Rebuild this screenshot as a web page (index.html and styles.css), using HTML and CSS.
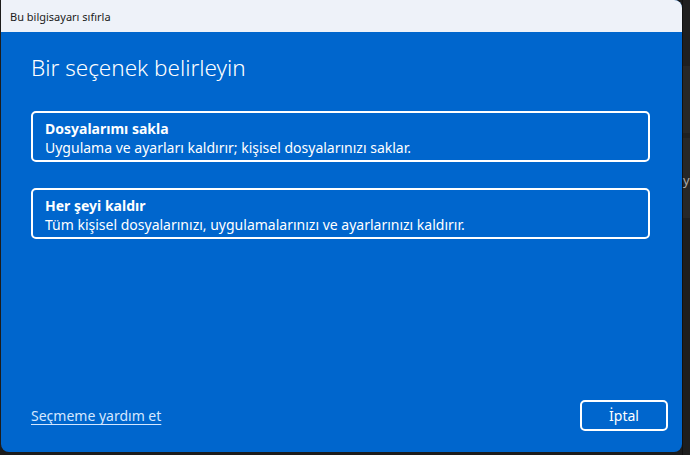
FILE: index.html
```html
<!DOCTYPE html>
<html lang="tr">
<head>
    <meta charset="UTF-8">
    <meta name="viewport" content="width=device-width, initial-scale=1.0">
    <title>Bu bilgisayarı sıfırla</title>
    <link rel="stylesheet" href="styles.css">
</head>
<body>
    <div class="window">
        <div class="titlebar">Bu bilgisayarı sıfırla</div>

        <div class="content">
            <h1>Bir seçenek belirleyin</h1>

            <div class="options">
                <button class="option">
                    <span class="option-title">Dosyalarımı sakla</span>
                    <span class="option-desc">Uygulama ve ayarları kaldırır; kişisel dosyalarınızı saklar.</span>
                </button>
                <button class="option">
                    <span class="option-title">Her şeyi kaldır</span>
                    <span class="option-desc">Tüm kişisel dosyalarınızı, uygulamalarınızı ve ayarlarınızı kaldırır.</span>
                </button>
            </div>

            <div class="footer">
                <a href="#" class="help-link">Seçmeme yardım et</a>
                <button class="cancel">İptal</button>
            </div>
        </div>
    </div>

    <!-- settings window peeking out behind the dialog -->
    <div class="behind">
        <div class="band band-top"></div>
        <div class="band band-light"></div>
        <div class="band band-sep"></div>
        <div class="band band-light band-text">y</div>
        <div class="band band-bottom"></div>
    </div>
</body>
</html>
```

FILE: styles.css
```css
body {
    margin: 0;
    height: 455px;
    display: flex;
    background-color: #1c1c1c;
    font-family: 'Noto Sans', 'Open Sans', sans-serif;
    overflow: hidden;
}

.window {
    width: 681px;
    height: 452px;
    margin-left: 1px;
    display: flex;
    flex-direction: column;
    border-radius: 0 8px 8px 8px;
    overflow: hidden;
    background-color: #0066cd;
}

.titlebar {
    height: 32px;
    flex-shrink: 0;
    display: flex;
    align-items: center;
    padding-left: 9px;
    background-color: #eef2f9;
    color: #1a1a1a;
    font-size: 11px;
}

.content {
    flex: 1;
    display: flex;
    flex-direction: column;
    padding: 0 14px 21px 30px;
    color: white;
}

h1 {
    margin: 20px 0 0 0;
    font-size: 22.5px;
    font-weight: 300;
    line-height: 32px;
}

.options {
    display: flex;
    flex-direction: column;
    gap: 26px;
    margin-top: 27px;
    margin-right: 18px;
}

.option {
    display: flex;
    flex-direction: column;
    align-items: flex-start;
    height: 51px;
    padding: 6px 12px 0 12px;
    background: none;
    border: 2px solid white;
    border-radius: 5px;
    color: white;
    font-family: inherit;
    text-align: left;
    cursor: pointer;
}

.option-title {
    font-size: 14px;
    font-weight: bold;
    line-height: 19px;
}

.option-desc {
    font-size: 14px;
    line-height: 19px;
}

.footer {
    margin-top: auto;
    display: flex;
    justify-content: space-between;
    align-items: center;
}

.help-link {
    color: #d4e7ff;
    font-size: 14px;
    text-decoration: underline;
    text-underline-offset: 3px;
}

.cancel {
    width: 88px;
    height: 31px;
    background: none;
    border: 2px solid white;
    border-radius: 5px;
    color: white;
    font-family: inherit;
    font-size: 14px;
    cursor: pointer;
}

.behind {
    flex: 1;
    display: flex;
    flex-direction: column;
    border-left: 1px solid #111;
}

.band {
    flex-shrink: 0;
}

.band-top {
    height: 66px;
    background-color: #1f1f1f;
}

.band-light {
    height: 67px;
    background-color: #272727;
}

.band-sep {
    height: 5px;
    background-color: #202020;
}

.band-text {
    height: 80px;
    color: #aaa;
    font-size: 13px;
    line-height: 84px;
}

.band-bottom {
    flex: 1;
    background-color: #1e1e1e;
}
```
